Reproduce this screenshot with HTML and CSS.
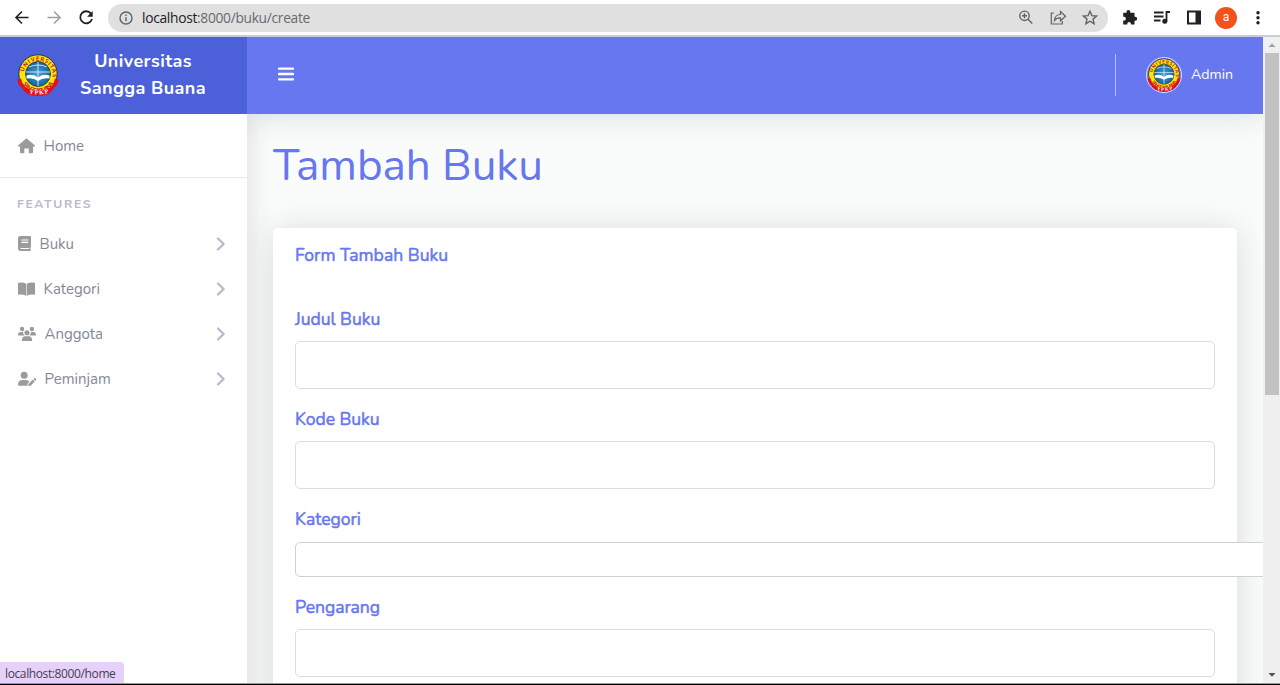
FILE: index.html
```html
<!DOCTYPE html>
<html lang="id">
<head>
<meta charset="utf-8">
<title>Tambah Buku</title>
<link rel="stylesheet" href="styles.css">
</head>
<body>
<svg width="0" height="0" class="defs">
  <defs>
    <radialGradient id="globe"><stop offset="0" stop-color="#4ba6d8"/><stop offset="1" stop-color="#1262a5"/></radialGradient>
    <path id="arc-top" d="M6.500 23A14.600 14.600 0 1 1 35.500 23"/>
    <path id="arc-low" d="M3.500 21A17.500 17.500 0 0 0 38.500 21"/>
    <path id="arc-band" d="M9 38.500Q21 42.500 33 38.500"/>
    <symbol id="crest" viewBox="0 0 42 42">
      <circle cx="21" cy="20" r="19.2" fill="#ffe800" stroke="#263044" stroke-width="1"/>
      <circle cx="21" cy="20" r="12.4" fill="url(#globe)" stroke="#33452f" stroke-width="1"/>
      <path d="M21 8v24M9 18h24M12 13q9-4 18 0" fill="none" stroke="#d7edf7" stroke-width=".9"/>
      <path d="M9.5 21.5q7-2 11.5 2 4.500-4 11.500-2v3q-7-1-11.500 2.500-4.500-3.500-11.500-2.500z" fill="#fff"/>
      <path d="M.3 25.500 4 24.500Q7 38 21 38T38 24.500L41.700 25.500Q40.500 33 36.500 34 34 41.500 21 41.800 8 41.500 5.500 34 1.500 33 .3 25.500Z" fill="#e5101d"/>
      <text class="crest-text"><textPath href="#arc-top" startOffset="5" textLength="44">UNIVERSITAS</textPath></text>
      <text class="crest-text"><textPath href="#arc-low" startOffset="9" textLength="37">SANGGA BUANA</textPath></text>
      <path d="M4 28Q8 36.300 21 36.300T38 28L36.500 34Q34 41.500 21 41.800 8 41.500 5.500 34Z" fill="#e5101d"/>
      <text class="crest-band"><textPath href="#arc-band" startOffset="3" textLength="20">YPKP</textPath></text>
    </symbol>
    <symbol id="chev" viewBox="0 0 10 14"><path d="M2 1.500 7.600 7 2 12.500" fill="none" stroke="#b7b9cc" stroke-width="2.300" stroke-linecap="round" stroke-linejoin="round"/></symbol>
  </defs>
</svg>
<div class="window">
  <div class="toolbar">
    <svg class="nav" width="104" height="36" viewBox="0 0 104 36" fill="none" stroke-width="1.600">
      <path d="M28.500 17.500H16.500M22 11.500l-6 6 6 6" stroke="#202124"/>
      <path d="M47.500 17.500h12M54 11.500l6 6-6 6" stroke="#a0a0a0"/>
      <path d="M91 13.600A6 6 0 1 0 92 19" stroke="#202124" stroke-width="1.800"/>
      <path d="M92.700 11v5.700H87z" fill="#202124"/>
    </svg>
    <div class="address">
      <svg class="info" width="14" height="14" viewBox="0 0 14 14"><circle cx="7" cy="7" r="6" fill="none" stroke="#5f6368" stroke-width="1.400"/><path d="M7 6.200v4M7 3.500v1.400" stroke="#5f6368" stroke-width="1.400"/></svg>
      <span class="url"><span class="host">localhost</span>:8000/buku/create</span>
      <svg class="address-icons" width="88" height="20" viewBox="1014 8 88 20" fill="none" stroke="#5f6368" stroke-width="1.400">
        <circle cx="1024.500" cy="15.800" r="4.700"/><path d="m1028 19.300 4.300 4.200M1022 15.800h5M1024.500 13.300v5"/>
        <path d="M1054 13h-2.700v11h11v-3M1054.500 20.500q.5-6 6-6v-3l5 4.700-5 4.600v-3q-4-.2-6 2.700z" stroke-width="1.200"/>
        <path d="m1090 11.300 1.900 4.300 4.700.4-3.600 3.100 1.100 4.600-4.100-2.500-4.100 2.500 1.100-4.600-3.600-3.100 4.700-.4z"/>
      </svg>
    </div>
    <svg class="browser-icons" width="92" height="36" viewBox="1118 0 92 36">
      <path d="M1123.200 12.800h3.300v-.8a1.900 1.900 0 0 1 3.800 0v.8h4.200v4h.7a2 2 0 0 1 0 4h-.7v3.600h-3.600v-.7a1.800 1.800 0 0 0-3.600 0v.7h-4.100v-3.800h.8a1.900 1.900 0 0 0 0-3.800h-.8z" fill="#202124"/>
      <path d="M1154 12.500h9.500M1154 16.500h9.500M1154 20.500h6.500M1166.500 21v-9h3.500" fill="none" stroke="#202124" stroke-width="1.800"/><circle cx="1164.800" cy="21.200" r="2.500" fill="#202124"/>
      <path d="M1188 11.500h12v12h-12z" fill="#fff" stroke="#202124" stroke-width="2"/><path d="M1195.500 11h5v13h-5z" fill="#202124"/>
    </svg>
    <span class="profile">a</span>
    <svg class="more" width="6" height="20" viewBox="0 0 6 20" fill="#202124"><circle cx="3" cy="4.700" r="1.700"/><circle cx="3" cy="9.700" r="1.700"/><circle cx="3" cy="14.700" r="1.700"/></svg>
  </div>
  <div class="page">
    <aside class="sidebar">
      <div class="brand"><svg class="brand-logo" width="42" height="42"><use href="#crest"/></svg><div class="brand-name">Universitas<br>Sangga Buana</div></div>
      <div class="item home">
        <svg width="17" height="16" viewBox="0 0 17 16" fill="#9b9b9b"><path d="M8.500.3 17 7.600q.2 1-.8 1h-1.100V14q0 1.300-1.300 1.300h-3V10.500H6.300v4.800h-3Q2 15.300 2 14V8.600H.8q-1 0-.8-1z"/></svg>
        <span>Home</span>
      </div>
      <div class="heading">FEATURES</div>
      <div class="item">
        <svg width="13" height="15" viewBox="0 0 13 15" fill="#9b9b9b"><path d="M2.500 0H12q1 0 1 1v9.500q0 .7-.6 1v1.700q.6.2.6.900t-.9.900H2.700Q0 15 0 12.300V2.500Q0 0 2.500 0z"/><path d="M3.500 4h6.700M3.500 6.400h6.700M2.600 12.500h8.600" stroke="#fff" stroke-width="1.100"/></svg>
        <span>Buku</span><svg class="chev" width="10" height="14"><use href="#chev"/></svg>
      </div>
      <div class="item">
        <svg width="17" height="14" viewBox="0 0 17 14" fill="#9b9b9b"><path d="M8.200 1.700v12Q5 12.300 0 12.700V1.500Q0 .8.700.7 5-.2 8.200 1.700zM8.800 1.700v12q3-1.400 8.200-1V1.500q0-.7-.7-.8Q12-.2 8.800 1.700z"/></svg>
        <span>Kategori</span><svg class="chev" width="10" height="14"><use href="#chev"/></svg>
      </div>
      <div class="item">
        <svg width="18" height="16" viewBox="0 0 19 16" fill="#9b9b9b"><circle cx="4.300" cy="2.700" r="2.300"/><circle cx="14.700" cy="2.700" r="2.300"/><circle cx="9.500" cy="6.700" r="2.700"/><path d="M0 9.500Q0 6 3 6h2.200Q5.300 8 6.800 9.700H0zM19 9.500Q19 6 16 6h-2.200q-.1 2-1.600 3.700H19zM4 15.500q0-5 4-5h3q4 0 4 5z"/></svg>
        <span>Anggota</span><svg class="chev" width="10" height="14"><use href="#chev"/></svg>
      </div>
      <div class="item">
        <svg width="18" height="16" viewBox="0 0 19 16" fill="#9b9b9b"><circle cx="6.500" cy="4" r="3.700"/><path d="M0 14q0-5 5-5h3q3 0 4 1.600l-1.600 1.800-.5 2.600H1q-1 0-1-1zM11.300 13l4.400-4.400 2 2-4.400 4.400-2.500.5zM16.300 8l.8-.8q.5-.4 1 0l1 1q.4.500 0 1l-.8.800z"/></svg>
        <span>Peminjam</span><svg class="chev" width="10" height="14"><use href="#chev"/></svg>
      </div>
    </aside>
    <div class="content">
      <header class="topbar">
        <svg class="burger" width="16" height="14" viewBox="0 0 16 14"><path d="M1 1.700h14M1 7h14M1 12.300h14" stroke="#fff" stroke-width="2.300" stroke-linecap="round"/></svg>
        <div class="user"><span class="avatar"><svg width="34" height="34"><use href="#crest"/></svg></span><span class="user-name">Admin</span></div>
      </header>
      <main class="main">
        <h1 class="title">Tambah Buku</h1>
        <form class="card">
          <h2 class="card-title">Form Tambah Buku</h2>
          <label class="label">Judul Buku</label><div class="field"></div>
          <label class="label">Kode Buku</label><div class="field"></div>
          <label class="label">Kategori</label><div class="field wide"></div>
          <label class="label">Pengarang</label><div class="field"></div>
        </form>
      </main>
    </div>
    <div class="scrollbar">
      <svg width="16" height="16" viewBox="0 0 16 16"><path d="M4.500 10 8 6.300 11.500 10z" fill="#a3a3a3"/></svg>
      <div class="thumb"></div>
      <svg class="down" width="16" height="16" viewBox="0 0 16 16"><path d="M4.500 6 8 9.700 11.500 6z" fill="#505050"/></svg>
    </div>
  </div>
  <div class="edge"></div>
  <div class="status">localhost:8000/home</div>
</div>
</body>
</html>
```
FILE: styles.css
```css
* { box-sizing: border-box; }
body { margin: 0; overflow: hidden; font-family: Nunito, Lato, sans-serif; }
.defs { position: absolute; }
.window { position: relative; width: 1280px; height: 685px; display: flex; flex-direction: column; overflow: hidden; background: #fff; }
.toolbar { height: 37px; flex: none; display: flex; align-items: center; background: #fff; border-bottom: 2px solid #c8cbdd; }
.nav { flex: none; margin-right: 4px; }
.address { width: 1000px; height: 28px; border-radius: 14px; background: #e0e0e0; display: flex; align-items: center; padding: 0 6px 0 11px; }
.info { margin-right: 9px; }
.url { font: 13.8px "Open Sans", sans-serif; color: #666a6e; letter-spacing: -.31px; padding-bottom: 1px; }
.host { color: #202124; }
.address-icons { margin-left: auto; }
.browser-icons { margin-left: 10px; }
.profile { width: 22px; height: 22px; border-radius: 50%; background: #f4511e; color: #fff; font: 12px/21px Roboto, sans-serif; text-align: center; margin-left: 5px; }
.more { margin-left: 18px; }
.page { flex: 1; min-height: 0; display: flex; }
.sidebar { width: 247px; flex: none; background: #fff; }
.brand { height: 77px; background: #4c60da; display: flex; align-items: center; padding: 0 0 1px 17px; }
.brand-logo { flex: none; }
.brand-name { width: 168px; text-align: center; color: #fff; font-size: 18px; font-weight: 700; line-height: 27px; letter-spacing: .4px; }
.item { height: 45.2px; display: flex; align-items: center; padding: 0 21px 0 17.5px; font-size: 15px; color: #858796; }
.item > span { margin-left: 9px; }
.chev { margin-left: auto; }
.home { height: 64px; border-bottom: 1px solid #e8e9ef; }
.heading { height: 43px; padding: 17px 0 0 17px; font-size: 12.2px; font-weight: 700; line-height: 18px; letter-spacing: 1.65px; color: #b7b9cc; }
.content { flex: 1; min-width: 0; display: flex; flex-direction: column; background: #fafcfb; overflow: hidden; }
.topbar { height: 77px; flex: none; background: #6777ef; display: flex; align-items: center; justify-content: space-between; padding: 0 30px 3px 31px; box-shadow: 0 2px 32px rgba(40, 50, 45, .14); }
.user { height: 42px; margin-top: 2px; display: flex; align-items: center; border-left: 1px solid #b6bff6; padding-left: 30px; color: #fff; font-size: 14.2px; }
.user-name { padding-bottom: 2px; }
.avatar { width: 36px; height: 36px; border: 1px solid #dce0ff; border-radius: 50%; overflow: hidden; margin-right: 9px; }
.avatar svg { display: block; }
.main { flex: 1; padding: 26px 26px 0; box-shadow: inset 20px 0 24px -16px rgba(40, 50, 45, .12); }
.title { margin: 0 0 36px; font-size: 44px; line-height: 52px; font-weight: 400; color: #6777ef; letter-spacing: -.06px; }
.card { height: 600px; padding: 13px 22px; border-radius: 5px; background: #fff; box-shadow: 0 2px 32px rgba(40, 50, 45, .16); }
.card-title, .label { font-size: 17.6px; font-weight: 400; color: #6777ef; -webkit-text-stroke: .5px #6777ef; }
.card-title { margin: 0 0 38px; line-height: 28px; }
.label { display: block; margin-bottom: 9px; line-height: 25px; letter-spacing: -.06px; }
.field { height: 48px; margin-bottom: 18px; border: 1px solid #dcdde0; border-radius: 5px; background: #fff; }
.wide { width: 1000px; height: 35px; margin: 10px 0 18px; border-color: #cfd1d4; }
.scrollbar { width: 17px; flex: none; display: flex; flex-direction: column; background: #f0f0f0; padding-left: 1px; }
.scrollbar svg { flex: none; }
.thumb { width: 14px; height: 342px; margin-left: 1px; background: #c1c1c1; }
.down { margin-top: auto; }
.edge { height: 2px; flex: none; background: #000; border-top: 1px solid #9a9a9a; }
.status { position: absolute; left: 0; bottom: 2px; width: 124px; height: 21px; padding-left: 5px; border-radius: 0 4px 0 0; background: #e6d1fb; color: #454050; font: 12px/23px "Open Sans", sans-serif; letter-spacing: -.38px; white-space: nowrap; }
.crest-text { font: 900 5.800px Lato, sans-serif; fill: #c5202c; }
.crest-band { font: 700 6px "Liberation Serif", serif; fill: #fff; }
```
